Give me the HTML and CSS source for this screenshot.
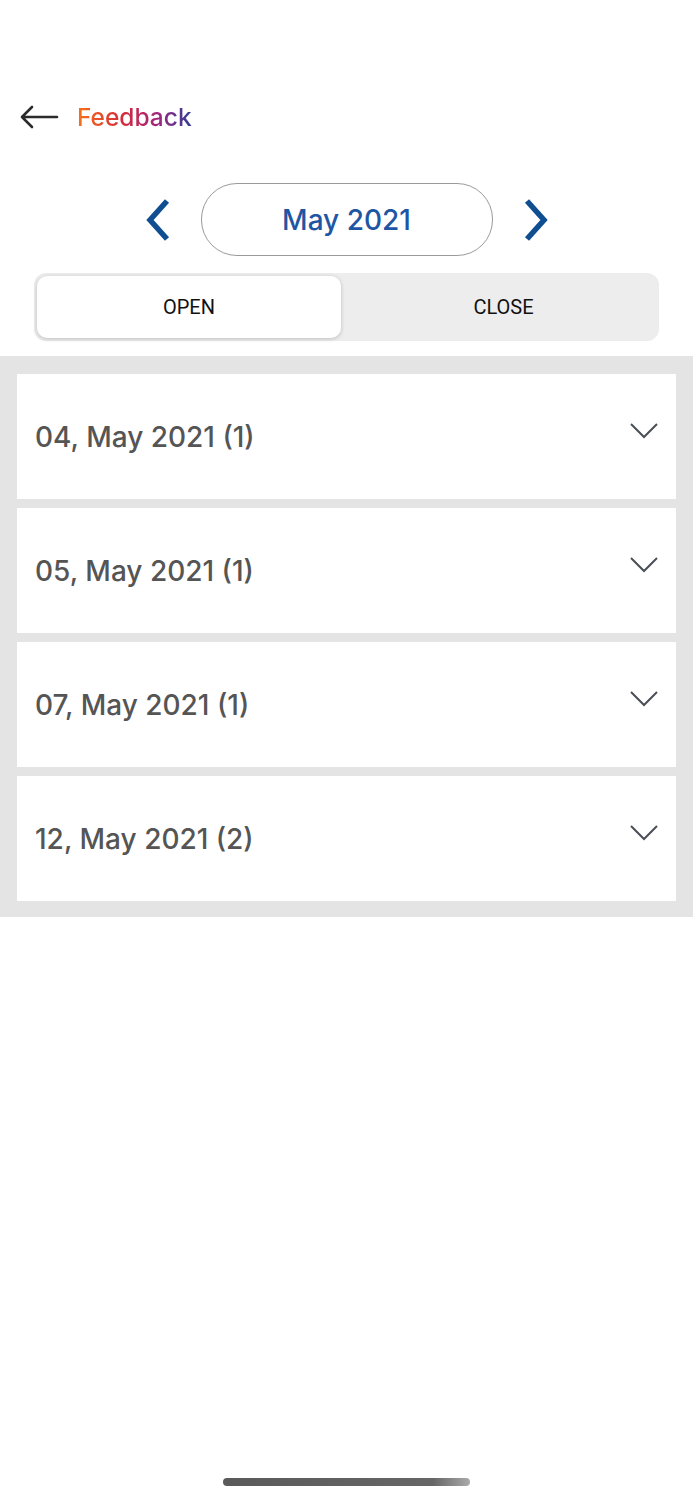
FILE: index.html
```html
<!DOCTYPE html>
<html lang="en">
<head>
	<meta charset="UTF-8">
	<title>Feedback</title>
	<link rel="stylesheet" href="styles.css">
</head>
<body>
<div class="page">
	<div class="topbar">
		<svg class="back" width="40" height="24" viewBox="0 0 40 24"><path d="M38 12H3M13 2L3 12l10 10" fill="none" stroke="#2b2b2b" stroke-width="2.6" stroke-linecap="round" stroke-linejoin="round"/></svg>
		<span class="title">Feedback</span>
	</div>
	<div class="month">
		<svg class="arrow" width="26" height="44" viewBox="0 0 26 44"><path d="M22 3L5 22l17 19" fill="none" stroke="#0f4f91" stroke-width="5.5"/></svg>
		<div class="pill">May 2021</div>
		<svg class="arrow" width="26" height="44" viewBox="0 0 26 44"><path d="M4 3l17 19L4 41" fill="none" stroke="#0f4f91" stroke-width="5.5"/></svg>
	</div>
	<div class="tabs">
		<div class="tab actived">OPEN</div>
		<div class="tab">CLOSE</div>
	</div>
	<div class="list">
		<div class="item"><span>04, May 2021 (1)</span><svg width="30" height="18" viewBox="0 0 30 18"><path d="M2 2l13 13L28 2" fill="none" stroke="#4a4f57" stroke-width="2"/></svg></div>
		<div class="item"><span>05, May 2021 (1)</span><svg width="30" height="18" viewBox="0 0 30 18"><path d="M2 2l13 13L28 2" fill="none" stroke="#4a4f57" stroke-width="2"/></svg></div>
		<div class="item"><span>07, May 2021 (1)</span><svg width="30" height="18" viewBox="0 0 30 18"><path d="M2 2l13 13L28 2" fill="none" stroke="#4a4f57" stroke-width="2"/></svg></div>
		<div class="item"><span>12, May 2021 (2)</span><svg width="30" height="18" viewBox="0 0 30 18"><path d="M2 2l13 13L28 2" fill="none" stroke="#4a4f57" stroke-width="2"/></svg></div>
	</div>
	<div class="home"></div>
</div>
</body>
</html>
```
FILE: styles.css
```css
body{margin:0;font-family:Inter,"Liberation Sans",Arial,sans-serif;background:#fff;}
.page{height:1500px;position:relative;}
.topbar{display:flex;align-items:center;padding:104px 0 0 19px;height:26px;}
.back{margin-right:18px;}
.title{font-size:24.5px;font-weight:500;background:linear-gradient(90deg,#f57418,#d42a3a 40%,#a2257e 70%,#2c3f97);-webkit-background-clip:text;background-clip:text;color:transparent;}
.month{display:flex;align-items:center;justify-content:center;margin-top:53px;gap:30px;}
.pill{width:290px;height:71px;border:1px solid #9a9a9a;border-radius:36px;display:flex;align-items:center;justify-content:center;font-size:28px;font-weight:500;color:#1f56a3;}
.tabs{display:flex;margin:17px 34px 0 34px;background:#ededed;border-radius:12px;padding:3px;height:62px;}
.tab{flex:1;display:flex;align-items:center;justify-content:center;font-size:20px;color:#111;border-radius:10px;font-family:Roboto,Inter,sans-serif;}
.tab.actived{flex:0 0 304px;background:#fff;box-shadow:0 1px 4px rgba(0,0,0,0.2);}
.tab + .tab{padding-left:10px;}
.list{background:#e4e4e4;margin-top:15px;padding:18px 17px 16px;display:flex;flex-direction:column;gap:9px;}
.item{background:#fff;height:125px;display:flex;align-items:center;justify-content:space-between;padding:0 17px 0 18px;}
.item span{font-size:28px;font-weight:500;color:#555;}
.item svg{margin-top:-12px;}
.home{position:absolute;left:223px;top:1478px;width:247px;height:8px;border-radius:4px;background:linear-gradient(90deg,#5a5a5a,#666 85%,#aaa);}
```
